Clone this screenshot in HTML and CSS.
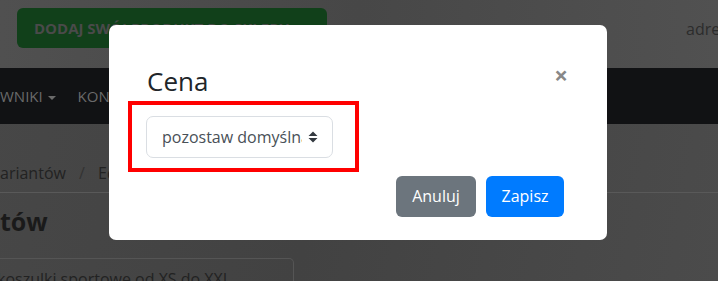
FILE: index.html
```html
<!DOCTYPE html>
<html lang="pl">
<head>
  <meta charset="UTF-8" />
  <meta name="viewport" content="width=device-width, initial-scale=1.0"/>
  <title>Edycja wariantów</title>
  <link rel="stylesheet" href="styles.css">
</head>
<body>
  <div class="page">
    <header class="top-bar">
      <a class="add-button">DODAJ SWÓJ PRODUKT DO SKLEPU</a>
      <span class="top-link">adres</span>
    </header>
    <nav class="navbar">
      <span class="nav-item">WNIKI <span class="caret"></span></span>
      <span class="nav-item">KONTAKT</span>
    </nav>
    <div class="breadcrumb">ariantów <span class="sep">/</span> Edycja</div>
    <h1 class="page-title">tów</h1>
    <div class="page-input">koszulki sportowe od XS do XXL</div>
  </div>

  <div class="modal">
    <div class="modal-header">
      <h5 class="modal-title">Cena</h5>
      <button type="button" class="close">&times;</button>
    </div>
    <div class="modal-body">
      <div class="highlight">
        <div class="select-wrap">
          <select class="form-select">
            <option>pozostaw domyślną</option>
            <option>ustaw własną</option>
          </select>
          <svg class="select-arrow" width="10" height="12" viewBox="0 0 10 12">
            <path d="M5 0.5 L9.5 5 L0.5 5 Z M0.5 7 L9.5 7 L5 11.5 Z" fill="#343a40"/>
          </svg>
        </div>
      </div>
    </div>
    <div class="modal-footer">
      <button type="button" class="btn btn-secondary">Anuluj</button>
      <button type="button" class="btn btn-primary">Zapisz</button>
    </div>
  </div>
</body>
</html>
```

FILE: styles.css
```css
body {
  margin: 0;
  font-family: 'Open Sans', 'Noto Sans', sans-serif;
  background: linear-gradient(100deg, #474747, #424242 45%, #4b4b4b);
  height: 281px;
  overflow: hidden;
}
.page {
  width: 718px;
  height: 281px;
  overflow: hidden;
}
.top-bar {
  height: 68px;
  display: flex;
  align-items: flex-start;
  justify-content: space-between;
  background: linear-gradient(90deg, #505050, #474747 50%, #515151);
}
.add-button {
  margin: 8px 0 0 17px;
  width: 310px;
  height: 40px;
  box-sizing: border-box;
  background-color: #11401a;
  border-radius: 6px;
  color: #4a4a4a;
  font-weight: 700;
  font-size: 15px;
  line-height: 40px;
  padding-left: 17px;
  white-space: nowrap;
  overflow: hidden;
}
.top-link {
  margin-top: 18px;
  width: 32px;
  font-size: 16px;
  color: #2c2c2c;
  overflow: hidden;
  white-space: nowrap;
}
.navbar {
  height: 56px;
  background-color: #111214;
  display: flex;
  align-items: center;
  gap: 22px;
}
.nav-item {
  color: #6a6a6a;
  font-size: 15px;
  white-space: nowrap;
}
.caret {
  display: inline-block;
  vertical-align: middle;
  border-top: 4px solid #6a6a6a;
  border-left: 4px solid transparent;
  border-right: 4px solid transparent;
  margin-left: 1px;
}
.breadcrumb {
  height: 69px;
  line-height: 98px;
  box-sizing: border-box;
  border-bottom: 1px solid #595959;
  font-size: 16px;
  color: #222;
  white-space: nowrap;
}
.sep {
  color: #333;
  margin: 0 9px;
}
.page-title {
  margin: 0;
  height: 65px;
  line-height: 56px;
  font-size: 25px;
  font-weight: 700;
  color: #1a1a1a;
}
.page-input {
  width: 294px;
  height: 40px;
  box-sizing: border-box;
  border: 1px solid #555;
  border-left: none;
  border-radius: 0 5px 5px 0;
  font-size: 16px;
  line-height: 40px;
  color: #222;
  text-indent: -3px;
  white-space: nowrap;
  overflow: hidden;
}

/* dialog */
.modal {
  position: absolute;
  left: 109px;
  top: 25px;
  width: 498px;
  box-sizing: border-box;
  background-color: #fff;
  border-radius: 7px;
  padding: 41px 39px 23px 39px;
}
.modal-header {
  display: flex;
  justify-content: space-between;
  align-items: flex-start;
}
.modal-title {
  margin: 0 0 0 -1px;
  font-size: 26px;
  line-height: 31px;
  font-weight: 400;
  color: #212529;
}
.close {
  margin-top: -3px;
  padding: 0;
  border: none;
  background: none;
  font-family: 'Open Sans', sans-serif;
  font-size: 24px;
  line-height: 24px;
  font-weight: 700;
  color: #888;
  cursor: pointer;
}
.modal-body {
  margin-top: 4px;
}
.highlight {
  display: inline-block;
  margin-left: -20px;
  border: 4px solid #ff0000;
  padding: 11px 22px 10px 14px;
}
.select-wrap {
  position: relative;
  width: 187px;
  height: 42px;
}
.form-select {
  appearance: none;
  -webkit-appearance: none;
  width: 187px;
  height: 42px;
  box-sizing: border-box;
  border: 1px solid #dadee3;
  border-radius: 7px;
  background-color: #fff;
  padding: 0 30px 0 15px;
  font-family: 'Open Sans', sans-serif;
  font-size: 16px;
  color: #495057;
}
.select-arrow {
  position: absolute;
  right: 15px;
  top: 15px;
  pointer-events: none;
}
.modal-footer {
  margin-top: 4px;
  padding-right: 4px;
  display: flex;
  justify-content: flex-end;
  gap: 10px;
}
.btn {
  border: none;
  border-radius: 6px;
  padding: 8px 15px;
  font-family: 'Open Sans', sans-serif;
  font-size: 16px;
  line-height: 25px;
  color: #fff;
  cursor: pointer;
}
.btn-secondary {
  background-color: #6c757d;
  width: 80px;
}
.btn-primary {
  background-color: #007bff;
  width: 78px;
}
```
